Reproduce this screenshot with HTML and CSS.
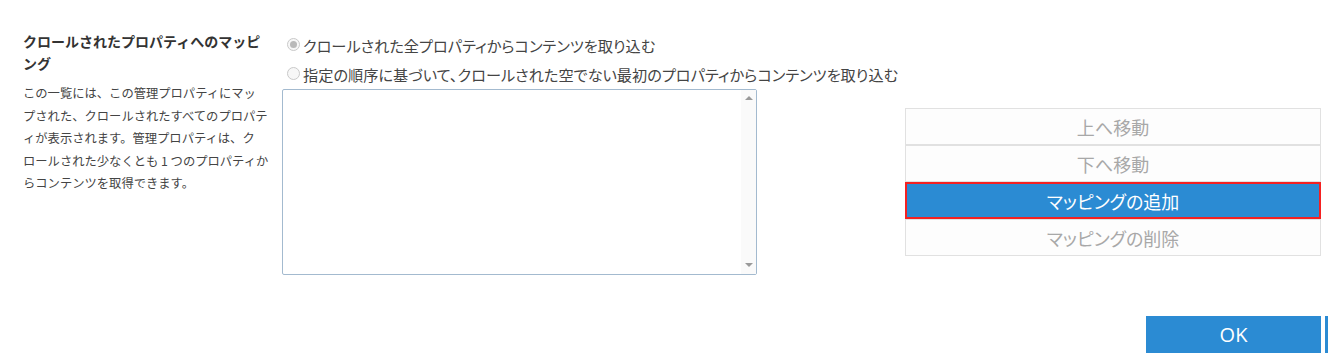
FILE: index.html
```html
<!DOCTYPE html>
<html lang="ja">
<head>
<meta charset="utf-8">
<title>クロールされたプロパティへのマッピング</title>
<link rel="stylesheet" href="styles.css">
</head>
<body>
<div class="page">
  <div class="main">
    <div class="info">
      <div class="title">クロールされたプロパティへのマッピ<br>ング</div>
      <div class="desc">この一覧には、この管理プロパティにマッ<br>プされた、クロールされたすべてのプロパテ<br>ィが表示されます。管理プロパティは、ク<br>ロールされた少なくとも 1 つのプロパティか<br>らコンテンツを取得できます。</div>
    </div>
    <div class="middle">
      <label class="opt"><span class="radio checked"></span><span>クロールされた全プロパティからコンテンツを取り込む</span></label>
      <label class="opt"><span class="radio"></span><span>指定の順序に基づいて、クロールされた空でない最初のプロパティからコンテンツを取り込む</span></label>
      <div class="listbox">
        <div class="scroll">
          <span class="arrow up"></span>
          <span class="arrow down"></span>
        </div>
      </div>
    </div>
    <div class="actions">
      <button class="btn">上へ移動</button>
      <button class="btn">下へ移動</button>
      <button class="btn active">マッピングの追加</button>
      <button class="btn">マッピングの削除</button>
    </div>
  </div>
  <div class="footer">
    <button class="primary">OK</button>
    <button class="primary" aria-label="キャンセル"></button>
  </div>
</div>
</body>
</html>
```
FILE: styles.css
```css
html, body {
  margin: 0;
  padding: 0;
  background: #ffffff;
  overflow: hidden;
}
body {
  width: 1328px;
  height: 362px;
  font-family: "Noto Sans CJK JP", "Noto Sans", sans-serif;
  color: #444444;
}
.page {
  padding: 30px 0 0 23px;
}
.main {
  display: flex;
  align-items: flex-start;
}
.info {
  width: 243px;
  flex: none;
}
.title {
  font-size: 14px;
  line-height: 22px;
  font-weight: bold;
  color: #333333;
  white-space: nowrap;
}
.desc {
  margin-top: 8px;
  font-size: 12.3px;
  line-height: 22.5px;
  color: #444444;
  white-space: nowrap;
}
.middle {
  margin-left: 16px;
  width: 623px;
  flex: none;
}
.opt {
  display: flex;
  align-items: center;
  height: 29px;
  padding-left: 5px;
  font-size: 15.2px;
  color: #444444;
  font-feature-settings: "palt";
  white-space: nowrap;
}
.radio {
  width: 11px;
  height: 11px;
  border: 1px solid #c9c9c9;
  border-radius: 50%;
  background: #f7f7f7;
  margin-right: 3px;
  flex: none;
  position: relative;
}
.radio.checked::after {
  content: "";
  position: absolute;
  left: 2px;
  top: 2px;
  width: 7px;
  height: 7px;
  border-radius: 50%;
  background: #b9b9b9;
}
.listbox {
  margin-top: 1px;
  width: 473px;
  height: 184px;
  border: 1px solid #a3bacf;
  border-radius: 2px;
  display: flex;
  justify-content: flex-end;
}
.scroll {
  width: 15px;
  background: #fafafa;
  display: flex;
  flex-direction: column;
  justify-content: space-between;
  align-items: center;
  padding: 6px 0 7px;
}
.arrow {
  width: 0;
  height: 0;
  border-left: 4px solid transparent;
  border-right: 4px solid transparent;
}
.arrow.up {
  border-bottom: 4px solid #9a9a9a;
}
.arrow.down {
  border-top: 4px solid #9a9a9a;
}
.actions {
  margin-top: 78px;
  width: 416px;
  flex: none;
  display: flex;
  flex-direction: column;
}
.btn {
  height: 37px;
  border: 1px solid #e1e1e1;
  background: #fdfdfd;
  color: #a8a8a8;
  font-family: "Noto Sans CJK JP", sans-serif;
  font-feature-settings: "palt";
  font-size: 18px;
  padding: 0;
  margin: 0;
}
.btn.active {
  background: #2b8bd3;
  color: #ffffff;
  border: 2px solid #f52121;
}
.footer {
  margin-top: 41px;
  display: flex;
  gap: 4px;
  padding-left: 1123px;
}
.primary {
  flex: none;
  width: 175px;
  height: 37px;
  border: none;
  background: #2b8bd3;
  color: #ffffff;
  font-family: "Open Sans", "Noto Sans CJK JP", sans-serif;
  font-size: 20px;
  padding: 0;
  margin: 0;
}
```
